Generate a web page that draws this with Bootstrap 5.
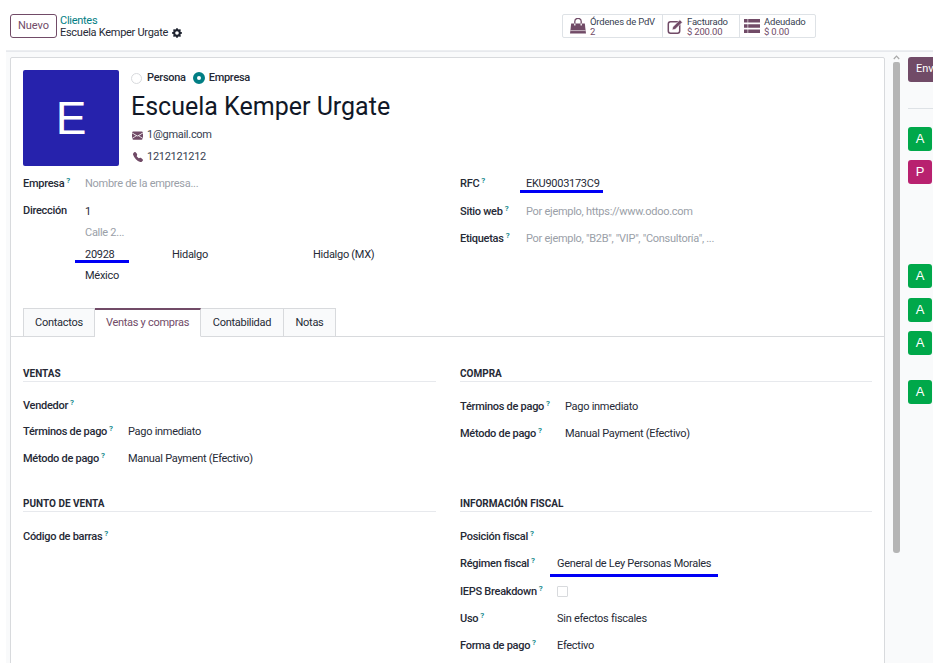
<!doctype html>
<html lang="es"><head><meta charset="utf-8">
<link href="https://cdn.jsdelivr.net/npm/bootstrap@5.3.0/dist/css/bootstrap.min.css" rel="stylesheet">
<style>
html,body{height:663px;overflow:hidden}
body{font-family:Roboto,"Noto Sans",sans-serif;font-size:11px;letter-spacing:-.28px;color:#262a36;background:#fff;line-height:16px}
.topbar{height:51px;padding:14px 0 0 10px}
.new-btn{height:24px;width:47px;padding:0;font-size:11px;font-weight:400;letter-spacing:0;color:#714b67;border:1px solid #714b67;border-radius:3px;background:#fff;line-height:22px}
.crumb{margin-left:3px;line-height:12px;padding-top:1px}
.crumb-top{color:#017e84;font-size:11px}
.crumb-cur{color:#262a36;font-size:11px}
.stats{margin-left:auto;margin-right:117px;height:24px;border:1px solid #dee2e6;border-radius:2px;width:254px}
.stat{height:22px;display:flex;align-items:center;gap:4px;border-right:1px solid #dee2e6;line-height:9.5px;font-size:9.5px;letter-spacing:-.2px;color:#374151}
.stat:last-child{border-right:0}
.stat-txt{padding-top:1px}
.stat .val{color:#714b67}
.s1{width:100px;padding-left:7px}.s2{width:77px;padding-left:4px;gap:3px}.s3{width:75px;padding-left:4px}
.workarea{height:612px;background:#f9fafb;margin-left:6px;border-top:1px solid #e7e9ed;box-shadow:0 -1px 0 #eceef1}
.sheetwrap{width:879px;padding:5px 0 0 4px}
.sheet{width:875px;height:640px;background:#fff;border:1px solid #d8dadd;border-radius:2px;padding:12px 0 0}
.head{padding-left:12px;height:96px}
.avatar{width:96px;height:96px;background:#2622ac;color:#fff;border-radius:2px;font-family:"Liberation Sans",sans-serif;font-size:46px;letter-spacing:0;line-height:97px;text-align:center}
.namecol{margin-left:12px;padding-top:1px}
.radio{width:11px;height:11px;border-radius:50%;border:1px solid #d8dadd;display:inline-block;background:#fff}
.radio.on{width:12px;height:12px;border:4px solid #017e84}
.radios{height:14px;line-height:14px;font-weight:500}
.gap-r{margin-left:5px;margin-right:7px}
.title{font-size:25px;letter-spacing:0;line-height:32px;margin:6px 0 1px;font-weight:400;color:#111827}
.contact{height:22px;line-height:22px;gap:4px;color:#374151}
.ico-a{margin-left:1px}
.ico-b{margin-left:2px}
.fm{padding-left:12px;margin-top:9px;height:133px;padding-top:1px}
.fl{width:437px;flex:none}
.lbl{font-weight:500;color:#262a36}
.lbl sup{color:#017e84;font-size:8px;font-weight:600;margin-left:2px}
.line{height:27px;line-height:16px;display:flex}
.line-r{height:27.5px}
.muted{color:#9aa0a8}
.wide{width:62px;flex:none}
.wide2{width:66px;flex:none}
.addr{line-height:21.4px;margin-top:-2px}
.pos{position:relative}
.blue{position:absolute;height:3px;background:#0000f5}
.tabsx{padding-left:12px;height:29px;margin:0;border-bottom:1px solid #d8dadd;font-size:11px}
.tabsx .nav-link{padding:0;height:29px;line-height:27px;text-align:center;border:1px solid #d8dadd;border-left-width:0;border-radius:0;background:#f9fafb;color:#262a36;margin:0}
.tabsx .nav-item:first-child .nav-link{border-left-width:1px}
.tabsx .nav-link.active{background:#fff;color:#714b67;border-top:2px solid #714b67;border-bottom-color:#fff;line-height:26px}
.t1{width:72px}.t2{width:106px}.t3{width:83px}.t4{width:52px}
.secs{padding:29px 0 0 12px}
.sc{width:413px;flex:none}
.sc2{margin-left:24px;width:412px}
.sect{font-size:10px;letter-spacing:0;font-weight:700;color:#262a36;line-height:16px;border-bottom:1px solid #e7e9ed;height:16px;margin-bottom:17px}
.sect-a{margin-bottom:16px}
.c1{width:105px;flex:none}
.c2{width:105px;flex:none}
.c3{width:97px;flex:none}
.vline{height:26px}
.fline{height:27.3px}
.cb{width:11px;height:11px;border:1px solid #d8dadd;border-radius:1px;display:block;margin-top:2px}
.scrollx{width:22px;position:relative;flex:none}
.scroll-thumb{width:7px;height:491px;background:#b5b5b5;margin:10px 0 0 8px;border-radius:2px 2px 3px 3px}
.scroll-arrow{position:absolute;left:8px;top:3px;width:7px;height:5px}
.chat{width:26px;overflow:hidden;flex:none;padding-left:1px}
.send{width:60px;height:25px;background:#714b67;color:#fff;border-radius:3px;padding:0 0 0 8px;margin-top:5px;line-height:24px;font-size:11px;letter-spacing:0}
.hr1{height:1px;background:#dee2e6;margin-top:26px;width:60px;margin-bottom:18px}
.ava{width:24px;height:24px;border-radius:3px;color:#fff;font-size:13px;letter-spacing:0;line-height:24px;text-align:center;font-family:"Liberation Sans",sans-serif;background:#00a84a}
.ava.p{background:#b8216f}
</style></head><body>
<div class="topbar d-flex align-items-start">
 <button class="btn new-btn">Nuevo</button>
 <div class="crumb">
  <div class="crumb-top">Clientes</div>
  <div class="crumb-cur d-flex align-items-center">Escuela Kemper Urgate
   <svg class="ms-1" width="10" height="10" viewBox="0 0 16 16" fill="#1f2430"><path d="M9.405 1.05c-.413-1.4-2.397-1.4-2.81 0l-.1.34a1.464 1.464 0 0 1-2.105.872l-.31-.17c-1.283-.698-2.686.705-1.987 1.987l.169.311c.446.82.023 1.841-.872 2.105l-.34.1c-1.4.413-1.4 2.397 0 2.81l.34.1a1.464 1.464 0 0 1 .872 2.105l-.17.31c-.698 1.283.705 2.686 1.987 1.987l.311-.169a1.464 1.464 0 0 1 2.105.872l.1.34c.413 1.4 2.397 1.4 2.81 0l.1-.34a1.464 1.464 0 0 1 2.105-.872l.31.17c1.283.698 2.686-.705 1.987-1.987l-.169-.311a1.464 1.464 0 0 1 .872-2.105l.34-.1c1.4-.413 1.4-2.397 0-2.81l-.34-.1a1.464 1.464 0 0 1-.872-2.105l.17-.31c.698-1.283-.705-2.686-1.987-1.987l-.311.169a1.464 1.464 0 0 1-2.105-.872l-.1-.34zM8 10.93a2.929 2.929 0 1 1 0-5.86 2.929 2.929 0 0 1 0 5.858z"/></svg>
  </div>
 </div>
 <div class="stats d-flex">
  <div class="stat s1">
   <svg width="16" height="16" viewBox="0 0 16 16" fill="#714b67"><path d="M1.2 5.5h13.6L16 15.5H0z"/><path d="M4.8 7.5V3.6a3.2 3.2 0 0 1 6.4 0v3.9" fill="none" stroke="#714b67" stroke-width="1.3"/><path d="M4.8 5.5v2M11.2 5.5v2" stroke="#fff" stroke-width="1.3"/><path d="M.4 12.6h15.2" stroke="#fff" stroke-width=".6"/></svg>
   <div class="stat-txt"><div>Órdenes de PdV</div><div class="val">2</div></div>
  </div>
  <div class="stat s2">
   <svg width="17" height="15" viewBox="0 0 16 15" fill="none"><rect x=".8" y="2.8" width="11.4" height="11.4" rx="2.2" stroke="#714b67" stroke-width="1.5"/><path d="M4.6 10.9l.7-3L12.4.8l2.5 2.5-7.2 7z" fill="#714b67" stroke="#fff" stroke-width=".6"/></svg>
   <div class="stat-txt"><div>Facturado</div><div class="val">$ 200.00</div></div>
  </div>
  <div class="stat s3">
   <svg width="16" height="14" viewBox="0 0 16 14" fill="#714b67"><path d="M0 0h3.6v3.6H0zM4.2 0H16v3.6H4.2zM0 5.2h3.6v3.6H0zM4.2 5.2H16v3.6H4.2zM0 10.4h3.6V14H0zM4.2 10.4H16V14H4.2z"/></svg>
   <div class="stat-txt"><div>Adeudado</div><div class="val">$ 0.00</div></div>
  </div>
 </div>
</div>
<div class="workarea d-flex">
 <div class="sheetwrap">
  <div class="sheet">
   <div class="head d-flex">
    <div class="avatar">E</div>
    <div class="namecol">
     <div class="radios d-flex align-items-center"><span class="radio"></span><span class="gap-r">Persona</span><span class="radio on"></span><span class="ms-1">Empresa</span></div>
     <h1 class="title">Escuela Kemper Urgate</h1>
     <div class="contact d-flex align-items-center">
      <svg class="ico-a" width="11" height="11" viewBox="0 0 16 16" fill="#714b67"><path d="M.05 3.555A2 2 0 0 1 2 2h12a2 2 0 0 1 1.95 1.555L8 8.414.05 3.555ZM0 4.697v7.104l5.803-3.558L0 4.697ZM6.761 8.83l-6.57 4.027A2 2 0 0 0 2 14h12a2 2 0 0 0 1.808-1.144l-6.57-4.027L8 9.586l-1.239-.757Zm3.436-.586L16 11.801V4.697l-5.803 3.546Z"/></svg>1@gmail.com</div>
     <div class="contact d-flex align-items-center">
      <svg class="ico-b" width="10" height="10" viewBox="0 0 16 16" fill="#714b67"><path d="M1.885.511a1.745 1.745 0 0 1 2.61.163L6.29 2.98c.329.423.445.974.315 1.494l-.547 2.19a.678.678 0 0 0 .178.643l2.457 2.457a.678.678 0 0 0 .644.178l2.189-.547a1.745 1.745 0 0 1 1.494.315l2.306 1.794c.829.645.905 1.87.163 2.611l-1.034 1.034c-.74.74-1.846 1.065-2.877.702a18.634 18.634 0 0 1-7.01-4.42 18.634 18.634 0 0 1-4.42-7.009c-.362-1.03-.037-2.137.703-2.877L1.885.511z"/></svg><span>1212121212</span></div>
    </div>
   </div>
   <div class="fm d-flex">
    <div class="fl">
     <div class="line"><div class="wide lbl">Empresa<sup>?</sup></div><div class="muted">Nombre de la empresa...</div></div>
     <div class="d-flex"><div class="wide lbl">Dirección</div>
      <div class="addr flex-grow-1">
       <div>1</div>
       <div class="muted">Calle 2...</div>
       <div class="d-flex pos"><div style="width:87px">20928</div><div style="width:141px">Hidalgo</div><div>Hidalgo (MX)</div><i class="blue" style="left:-10px;top:16px;width:54px"></i></div>
       <div>México</div>
      </div>
     </div>
    </div>
    <div class="flex-grow-1">
     <div class="line line-r"><div class="wide2 lbl">RFC<sup>?</sup></div><div class="pos">EKU9003173C9<i class="blue" style="left:-6px;top:14px;width:83px"></i></div></div>
     <div class="line line-r"><div class="wide2 lbl">Sitio web<sup>?</sup></div><div class="muted">Por ejemplo, https://www.odoo.com</div></div>
     <div class="line line-r"><div class="wide2 lbl">Etiquetas<sup>?</sup></div><div class="muted">Por ejemplo, "B2B", "VIP", "Consultoría", ...</div></div>
    </div>
   </div>
   <ul class="nav tabsx">
    <li class="nav-item t1"><a class="nav-link" href="#">Contactos</a></li>
    <li class="nav-item t2"><a class="nav-link active" href="#">Ventas y compras</a></li>
    <li class="nav-item t3"><a class="nav-link" href="#">Contabilidad</a></li>
    <li class="nav-item t4"><a class="nav-link" href="#">Notas</a></li>
   </ul>
   <div class="secs">
    <div class="d-flex" style="height:130px">
     <div class="sc">
      <div class="sect sect-a">VENTAS</div>
      <div class="line vline"><div class="c1 lbl">Vendedor<sup>?</sup></div></div>
      <div class="line"><div class="c1 lbl">Términos de pago<sup>?</sup></div><div>Pago inmediato</div></div>
      <div class="line"><div class="c1 lbl">Método de pago<sup>?</sup></div><div>Manual Payment (Efectivo)</div></div>
     </div>
     <div class="sc sc2">
      <div class="sect">COMPRA</div>
      <div class="line"><div class="c2 lbl">Términos de pago<sup>?</sup></div><div>Pago inmediato</div></div>
      <div class="line"><div class="c2 lbl">Método de pago<sup>?</sup></div><div>Manual Payment (Efectivo)</div></div>
     </div>
    </div>
    <div class="d-flex">
     <div class="sc">
      <div class="sect">PUNTO DE VENTA</div>
      <div class="line"><div class="c1 lbl">Código de barras<sup>?</sup></div></div>
     </div>
     <div class="sc sc2">
      <div class="sect">INFORMACIÓN FISCAL</div>
      <div class="line fline"><div class="c3 lbl">Posición fiscal<sup>?</sup></div></div>
      <div class="line fline"><div class="c3 lbl">Régimen fiscal<sup>?</sup></div><div class="pos">General de Ley Personas Morales<i class="blue" style="left:-7px;top:18px;width:168px"></i></div></div>
      <div class="line fline"><div class="c3 lbl">IEPS Breakdown<sup>?</sup></div><span class="cb"></span></div>
      <div class="line fline"><div class="c3 lbl">Uso<sup>?</sup></div><div>Sin efectos fiscales</div></div>
      <div class="line fline"><div class="c3 lbl">Forma de pago<sup>?</sup></div><div>Efectivo</div></div>
     </div>
    </div>
   </div>
  </div>
 </div>
 <div class="scrollx">
  <svg class="scroll-arrow" viewBox="0 0 7 5" fill="none"><path d="M.8 4L3.5 1.2 6.2 4" stroke="#a8a8a8" stroke-width="1.2"/></svg>
  <div class="scroll-thumb"></div>
 </div>
 <div class="chat">
  <div class="send">Enviar</div>
  <div class="hr1"></div>
  <div class="ava">A</div>
  <div class="ava p" style="margin-top:9px">P</div>
  <div class="ava" style="margin-top:80px">A</div>
  <div class="ava" style="margin-top:10px">A</div>
  <div class="ava" style="margin-top:9px">A</div>
  <div class="ava" style="margin-top:25px">A</div>
 </div>
</div>
</body></html>
